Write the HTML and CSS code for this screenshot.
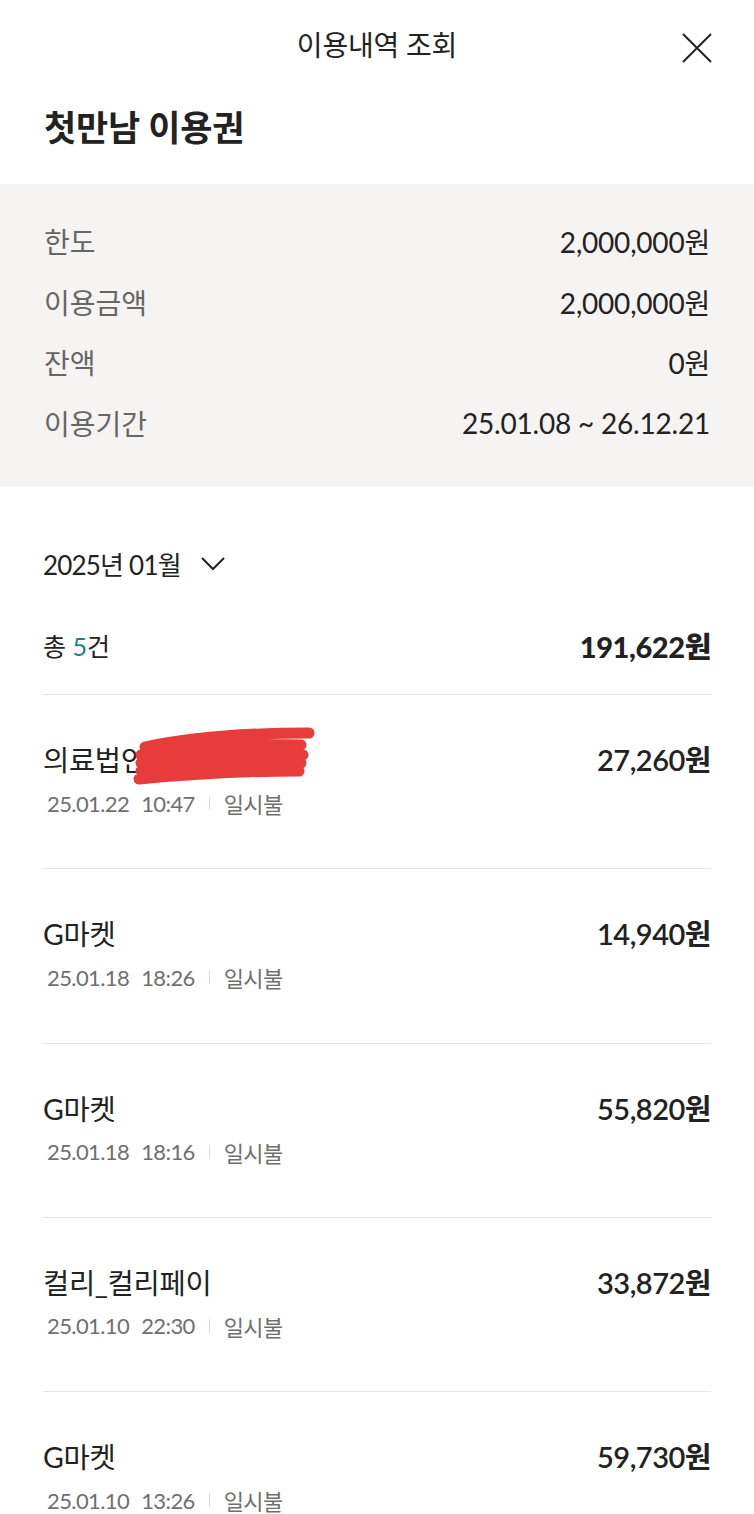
FILE: index.html
```html
<!DOCTYPE html>
<html lang="ko">

<head>
    <meta charset="UTF-8">
    <meta name="viewport" content="width=device-width, initial-scale=1.0">
    <title>이용내역 조회</title>
    <link rel="stylesheet" href="styles.css">
</head>

<body>
    <div class="page">
        <div class="topbar">
            <span class="topbar-title">이용내역 조회</span>
            <button class="close-btn" aria-label="닫기">
                <svg width="32" height="32" viewBox="0 0 32 32">
                    <path d="M2 2 L30 30 M30 2 L2 30" stroke="#222" stroke-width="2" fill="none" />
                </svg>
            </button>
        </div>

        <h1 class="voucher-name">첫만남 이용권</h1>

        <!-- Summary box -->
        <div class="summary">
            <div class="summary-row">
                <span class="label">한도</span>
                <span class="value">2,000,000원</span>
            </div>
            <div class="summary-row">
                <span class="label">이용금액</span>
                <span class="value">2,000,000원</span>
            </div>
            <div class="summary-row">
                <span class="label">잔액</span>
                <span class="value">0원</span>
            </div>
            <div class="summary-row">
                <span class="label">이용기간</span>
                <span class="value">25.01.08 ~ 26.12.21</span>
            </div>
        </div>

        <div class="history">
            <div class="month-select">
                <span>2025년 01월</span>
                <svg width="26" height="16" viewBox="0 0 26 16">
                    <path d="M2 3 L13 14 L24 3" stroke="#222" stroke-width="2" fill="none" />
                </svg>
            </div>

            <div class="total">
                <span class="count">총 <em>5</em>건</span>
                <span class="total-amount">191,622원</span>
            </div>

            <ul class="tx-list">
                <li class="tx">
                    <div class="tx-info">
                        <div class="tx-name">의료법인가나다라마바
                            <svg class="scribble" width="190" height="64" viewBox="0 0 190 64">
                                <path d="M14 22 C60 12 120 8 178 8 M10 30 C60 22 120 18 170 20 M10 38 C60 30 120 28 172 30 M10 46 C60 40 120 38 170 38 M8 54 C50 50 110 46 168 46" stroke="#e83c3c" stroke-width="11" stroke-linecap="round" fill="none" />
                            </svg>
                        </div>
                        <div class="tx-meta">
                            <span>25.01.22</span><span>10:47</span><i class="bar"></i><span>일시불</span>
                        </div>
                    </div>
                    <span class="tx-amount">27,260원</span>
                </li>
                <li class="tx">
                    <div class="tx-info">
                        <div class="tx-name">G마켓</div>
                        <div class="tx-meta">
                            <span>25.01.18</span><span>18:26</span><i class="bar"></i><span>일시불</span>
                        </div>
                    </div>
                    <span class="tx-amount">14,940원</span>
                </li>
                <li class="tx">
                    <div class="tx-info">
                        <div class="tx-name">G마켓</div>
                        <div class="tx-meta">
                            <span>25.01.18</span><span>18:16</span><i class="bar"></i><span>일시불</span>
                        </div>
                    </div>
                    <span class="tx-amount">55,820원</span>
                </li>
                <li class="tx">
                    <div class="tx-info">
                        <div class="tx-name">컬리_컬리페이</div>
                        <div class="tx-meta">
                            <span>25.01.10</span><span>22:30</span><i class="bar"></i><span>일시불</span>
                        </div>
                    </div>
                    <span class="tx-amount">33,872원</span>
                </li>
                <li class="tx">
                    <div class="tx-info">
                        <div class="tx-name">G마켓</div>
                        <div class="tx-meta">
                            <span>25.01.10</span><span>13:26</span><i class="bar"></i><span>일시불</span>
                        </div>
                    </div>
                    <span class="tx-amount">59,730원</span>
                </li>
            </ul>
        </div>
    </div>
</body>

</html>
```

FILE: styles.css
```css
* {
    padding: 0;
    margin: 0;
    box-sizing: border-box;
}

body {
    font-family: Lato, "Noto Sans CJK KR", sans-serif;
    color: #222;
    background: #fff;
}

.page {
    width: 100%;
}

/* Top bar */
.topbar {
    height: 90px;
    display: flex;
    align-items: center;
    justify-content: center;
    position: relative;
}

.topbar-title {
    font-size: 28px;
    letter-spacing: -0.2px;
    margin-top: -2px;
}

.close-btn {
    position: absolute;
    right: 41px;
    top: 32px;
    border: none;
    background: none;
    width: 32px;
    height: 32px;
}

.close-btn svg {
    display: block;
}

.voucher-name {
    font-size: 35px;
    font-weight: 700;
    padding: 10px 44px 0;
    height: 94px;
    letter-spacing: -0.2px;
}

/* Summary */
.summary {
    background: #f5f4f2;
    padding: 27px 44px 34px;
}

.summary-row {
    height: 60.5px;
    display: flex;
    justify-content: space-between;
    align-items: center;
    font-size: 28px;
}

.summary-row .label {
    color: #666;
}

.summary-row .value {
    letter-spacing: -0.2px;
}

/* History */
.history {
    padding: 0 43px;
}

.month-select {
    margin-top: 56px;
    height: 40px;
    display: flex;
    align-items: center;
    gap: 19px;
    font-size: 26px;
    letter-spacing: -0.8px;
}

.total {
    margin-top: 20px;
    height: 92px;
    display: flex;
    justify-content: space-between;
    align-items: center;
    border-bottom: 1px solid #e6e6e6;
    padding-bottom: 8px;
}

.count {
    font-size: 25px;
}

.count em {
    font-style: normal;
    color: #1d7f86;
}

.total-amount {
    font-size: 29px;
    font-weight: 900;
    letter-spacing: -0.4px;
}

.tx-list {
    list-style: none;
}

.tx {
    height: 174.25px;
    display: flex;
    justify-content: space-between;
    align-items: flex-start;
    padding-top: 45px;
    border-bottom: 1px solid #e6e6e6;
}

.tx:last-child {
    border-bottom: none;
}

.tx-name {
    font-size: 28.5px;
    height: 40px;
    line-height: 40px;
    letter-spacing: -0.3px;
    position: relative;
    white-space: nowrap;
}

.scribble {
    position: absolute;
    left: 88px;
    top: -15px;
}

.tx-meta {
    margin-top: 7px;
    padding-left: 4px;
    display: flex;
    align-items: center;
    gap: 12px;
    font-size: 22px;
    color: #6f6f6f;
    letter-spacing: -0.6px;
}

.tx-meta .bar {
    width: 1px;
    height: 14px;
    background: #ddd;
    margin: 0 2px;
}

.tx-amount {
    font-size: 29px;
    font-weight: 600;
    letter-spacing: -0.5px;
    line-height: 40px;
}
```
